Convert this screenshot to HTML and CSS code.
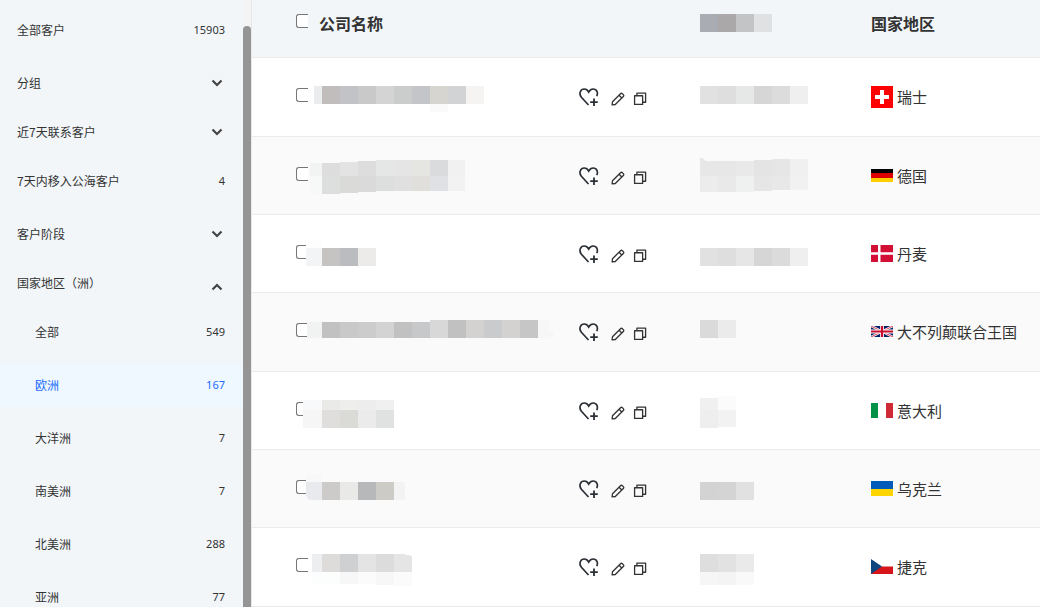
FILE: index.html
```html
<!DOCTYPE html>
<html lang="zh-CN">
<head>
  <meta charset="UTF-8">
  <meta name="viewport" content="width=device-width, initial-scale=1.0">
  <title>客户列表</title>
  <link rel="stylesheet" href="styles.css">
</head>

<body>
  <!-- shared icons -->
  <svg class="sprite" aria-hidden="true">
    <symbol id="arrow-down" viewBox="0 0 12 8">
      <path d="M1.5 1.5 L6 6 L10.5 1.5" fill="none" stroke="#444" stroke-width="2.2"/>
    </symbol>
    <symbol id="arrow-up" viewBox="0 0 12 8">
      <path d="M1.5 6.5 L6 2 L10.5 6.5" fill="none" stroke="#444" stroke-width="2.2"/>
    </symbol>
    <symbol id="heart" viewBox="0 0 20 18">
      <path d="M9.5 17 L2.4 9.3 C-0.6 5.5 1.6 1 5.2 1 C7.6 1 8.9 2.4 9.7 4 C10.6 2.4 12 1 14.2 1 C17.8 1 19.4 4.8 17.7 8.2" fill="none" stroke="#2b2f36" stroke-width="1.7"/>
      <path d="M15 10.5 V18 M11.2 14.2 H18.8" fill="none" stroke="#2b2f36" stroke-width="1.8"/>
    </symbol>
    <symbol id="pencil" viewBox="0 0 15 15">
      <path d="M1.2 13.8 L1.6 10.4 L10.2 1.8 Q11.2 0.8 12.2 1.8 L13.2 2.8 Q14.2 3.8 13.2 4.8 L4.6 13.4 Z M8.6 3.4 L11.6 6.4" fill="none" stroke="#333" stroke-width="1.4" stroke-linejoin="round"/>
    </symbol>
    <symbol id="copy" viewBox="0 0 15 15">
      <path d="M1.7 4 H10.3 V13.3 H1.7 Z M4.2 3.6 V1.2 H13.5 V11 H10.7" fill="none" stroke="#333" stroke-width="1.4" stroke-linejoin="round"/>
    </symbol>
  </svg>

  <div class="page">
    <nav class="sidebar">
      <a class="item" href="#"><span>全部客户</span><span class="count">15903</span></a>
      <button type="button" class="item group"><span>分组</span><svg class="arrow"><use href="#arrow-down"/></svg></button>
      <button type="button" class="item group"><span>近7天联系客户</span><svg class="arrow"><use href="#arrow-down"/></svg></button>
      <a class="item" href="#"><span>7天内移入公海客户</span><span class="count">4</span></a>
      <button type="button" class="item group"><span>客户阶段</span><svg class="arrow"><use href="#arrow-down"/></svg></button>
      <button type="button" class="item group open"><span>国家地区（洲）</span><svg class="arrow"><use href="#arrow-up"/></svg></button>
      <a class="item sub" href="#"><span>全部</span><span class="count">549</span></a>
      <a class="item sub active" href="#"><span>欧洲</span><span class="count">167</span></a>
      <a class="item sub" href="#"><span>大洋洲</span><span class="count">7</span></a>
      <a class="item sub" href="#"><span>南美洲</span><span class="count">7</span></a>
      <a class="item sub" href="#"><span>北美洲</span><span class="count">288</span></a>
      <a class="item sub" href="#"><span>亚洲</span><span class="count">77</span></a>
    </nav>
    <div class="scrollbar"><div class="thumb"></div></div>

    <main class="main">
      <table class="customers">
        <colgroup>
          <col class="col-name">
          <col class="col-hidden">
          <col>
        </colgroup>
        <thead>
          <tr>
            <th>
              <div class="head"><input type="checkbox" id="all"><label for="all">公司名称</label></div>
            </th>
            <th>
              <div class="head">
                <svg class="head-mosaic" viewBox="0 0 72 18" aria-hidden="true">
                  <rect width="18" height="18" fill="#a9acb2"/><rect x="18" width="18" height="18" fill="#aaa8a9"/><rect x="36" width="18" height="18" fill="#c3c4c6"/><rect x="54" width="18" height="18" fill="#e0e1e2"/>
                </svg>
              </div>
            </th>
            <th><div class="head">国家地区</div></th>
          </tr>
        </thead>
        <tbody>
          <tr>
            <td>
              <div class="company">
                <input type="checkbox" aria-label="选择">
                <svg class="mosaic" viewBox="0 0 252 77" aria-hidden="true">
                  <rect x="12" y="28" width="8" height="18" fill="#ebeced"/><rect x="20" y="28" width="18" height="18" fill="#c2bdbd"/><rect x="38" y="28" width="18" height="18" fill="#c1c3c6"/><rect x="56" y="28" width="18" height="18" fill="#c9c9ca"/><rect x="74" y="28" width="18" height="18" fill="#d4d4d4"/><rect x="92" y="28" width="18" height="18" fill="#cbcdcc"/><rect x="110" y="28" width="18" height="18" fill="#c3c5c8"/><rect x="128" y="28" width="18" height="18" fill="#d6d5d0"/><rect x="146" y="28" width="18" height="18" fill="#d1d3d5"/><rect x="164" y="28" width="18" height="18" fill="#f5f4f3"/>
                  <rect x="128" y="46" width="18" height="8" fill="#fafafa"/>
                </svg>
                <div class="actions">
                  <button type="button" aria-label="收藏"><svg class="heart"><use href="#heart"/></svg></button>
                  <button type="button" aria-label="编辑"><svg class="icon"><use href="#pencil"/></svg></button>
                  <button type="button" aria-label="复制"><svg class="icon"><use href="#copy"/></svg></button>
                </div>
              </div>
            </td>
            <td>
              <svg class="mosaic small" viewBox="0 0 108 77" aria-hidden="true">
                <rect y="28" width="18" height="18" fill="#e1e1e1"/><rect x="18" y="28" width="18" height="18" fill="#dedede"/><rect x="36" y="28" width="18" height="18" fill="#e5e8e7"/><rect x="54" y="28" width="18" height="18" fill="#d6d6d6"/><rect x="72" y="28" width="18" height="18" fill="#dcdcdc"/><rect x="90" y="28" width="18" height="18" fill="#efefef"/>
              </svg>
            </td>
            <td>
              <div class="country">
                <svg class="flag" viewBox="0 0 22 22"><rect width="22" height="22" fill="#f00"/><path d="M9 4 H13 V9 H18 V13 H13 V18 H9 V13 H4 V9 H9 Z" fill="#fff"/></svg>
                <span>瑞士</span>
              </div>
            </td>
          </tr>
          <tr>
            <td>
              <div class="company">
                <input type="checkbox" aria-label="选择">
                <svg class="mosaic" viewBox="0 0 252 77" aria-hidden="true">
                  <rect x="8" y="26" width="12" height="13" fill="#f2f4f4"/><rect x="20" y="26" width="18" height="13" fill="#dddddd"/><rect x="38" y="25" width="18" height="14" fill="#e3e3e3"/><rect x="56" y="24" width="18" height="15" fill="#dddddd"/><rect x="74" y="23" width="18" height="16" fill="#e4e7e6"/><rect x="92" y="23" width="18" height="16" fill="#e5e5e5"/><rect x="110" y="23" width="18" height="16" fill="#e5e5e2"/><rect x="128" y="23" width="18" height="16" fill="#dadbdd"/><rect x="146" y="23" width="17" height="16" fill="#f1f1f1"/>
                  <rect x="8" y="39" width="12" height="18" fill="#f6f9f8"/><rect x="20" y="39" width="18" height="18" fill="#dddede"/><rect x="38" y="39" width="18" height="17" fill="#dadad8"/><rect x="56" y="39" width="18" height="16" fill="#dadada"/><rect x="74" y="39" width="18" height="15" fill="#dddede"/><rect x="92" y="39" width="18" height="15" fill="#e0e0e0"/><rect x="110" y="39" width="18" height="15" fill="#e1dfdc"/><rect x="128" y="39" width="18" height="15" fill="#e0e1e4"/><rect x="146" y="39" width="17" height="15" fill="#f2f2f2"/>
                </svg>
                <div class="actions">
                  <button type="button" aria-label="收藏"><svg class="heart"><use href="#heart"/></svg></button>
                  <button type="button" aria-label="编辑"><svg class="icon"><use href="#pencil"/></svg></button>
                  <button type="button" aria-label="复制"><svg class="icon"><use href="#copy"/></svg></button>
                </div>
              </div>
            </td>
            <td>
              <svg class="mosaic small" viewBox="0 0 108 77" aria-hidden="true">
                <path d="M0 21 H3 L5 24 H18 V39 H0 Z" fill="#e7e7e7"/><rect x="18" y="24" width="18" height="15" fill="#e7e7e7"/><rect x="36" y="24" width="18" height="15" fill="#e9e9e9"/><rect x="54" y="23" width="18" height="16" fill="#e4e4e4"/><rect x="72" y="22" width="18" height="17" fill="#e6e6e6"/><rect x="90" y="22" width="18" height="17" fill="#f0f0f0"/>
                <rect y="39" width="18" height="16" fill="#ececec"/><rect x="18" y="39" width="18" height="16" fill="#e9e9e9"/><rect x="36" y="39" width="18" height="16" fill="#eef1f0"/><rect x="54" y="39" width="18" height="15" fill="#e6e6e6"/><rect x="72" y="39" width="18" height="14" fill="#e8e8e8"/><rect x="90" y="39" width="18" height="14" fill="#f1f1f1"/>
              </svg>
            </td>
            <td>
              <div class="country">
                <svg class="flag" viewBox="0 0 22 13"><rect width="22" height="13" fill="#ffce00"/><rect width="22" height="9" fill="#d00"/><rect width="22" height="4" fill="#000"/></svg>
                <span>德国</span>
              </div>
            </td>
          </tr>
          <tr>
            <td>
              <div class="company">
                <input type="checkbox" aria-label="选择">
                <svg class="mosaic" viewBox="0 0 252 77" aria-hidden="true">
                  <rect x="4" y="24" width="16" height="9" fill="#fdfdfd"/><rect x="4" y="33" width="16" height="18" fill="#f2f4f6"/><rect x="20" y="33" width="18" height="18" fill="#c6c4c2"/><rect x="38" y="33" width="18" height="18" fill="#babcbf"/><rect x="56" y="33" width="18" height="18" fill="#edebea"/>
                </svg>
                <div class="actions">
                  <button type="button" aria-label="收藏"><svg class="heart"><use href="#heart"/></svg></button>
                  <button type="button" aria-label="编辑"><svg class="icon"><use href="#pencil"/></svg></button>
                  <button type="button" aria-label="复制"><svg class="icon"><use href="#copy"/></svg></button>
                </div>
              </div>
            </td>
            <td>
              <svg class="mosaic small" viewBox="0 0 108 77" aria-hidden="true">
                <rect y="33" width="18" height="18" fill="#e1e1e1"/><rect x="18" y="33" width="18" height="18" fill="#dedede"/><rect x="36" y="33" width="18" height="18" fill="#e6e6e6"/><rect x="54" y="33" width="18" height="18" fill="#d6d6d6"/><rect x="72" y="33" width="18" height="18" fill="#dbdbdb"/><rect x="90" y="33" width="18" height="18" fill="#efefef"/>
              </svg>
            </td>
            <td>
              <div class="country">
                <svg class="flag" viewBox="0 0 22 17"><rect width="22" height="17" fill="#d20f34"/><path d="M7 0 H9.5 V7.3 H22 V9.7 H9.5 V17 H7 V9.7 H0 V7.3 H7 Z" fill="#fff"/></svg>
                <span>丹麦</span>
              </div>
            </td>
          </tr>
          <tr>
            <td>
              <div class="company">
                <input type="checkbox" aria-label="选择">
                <svg class="mosaic" viewBox="0 0 252 77" aria-hidden="true">
                  <rect x="5" y="29" width="15" height="16" fill="#f0f3f2"/><rect x="20" y="29" width="18" height="16" fill="#c1c1c1"/><rect x="38" y="29" width="18" height="16" fill="#c9c9ca"/><rect x="56" y="29" width="18" height="16" fill="#cccccd"/><rect x="74" y="29" width="18" height="16" fill="#d3d3d3"/><rect x="92" y="29" width="18" height="16" fill="#c1c1c1"/><rect x="110" y="29" width="18" height="16" fill="#c6c8ca"/><rect x="128" y="27" width="18" height="18" fill="#d8d8d8"/><rect x="146" y="27" width="18" height="18" fill="#c1c1c1"/><rect x="164" y="27" width="18" height="18" fill="#d4d2d0"/><rect x="182" y="27" width="18" height="18" fill="#c9cbcd"/><rect x="200" y="27" width="18" height="18" fill="#d4d2d0"/><rect x="218" y="27" width="18" height="18" fill="#c6c6c6"/>
                  <path d="M236 27 H247 V38 H252 V45 H236 Z" fill="#f7f7f7"/>
                </svg>
                <div class="actions">
                  <button type="button" aria-label="收藏"><svg class="heart"><use href="#heart"/></svg></button>
                  <button type="button" aria-label="编辑"><svg class="icon"><use href="#pencil"/></svg></button>
                  <button type="button" aria-label="复制"><svg class="icon"><use href="#copy"/></svg></button>
                </div>
              </div>
            </td>
            <td>
              <svg class="mosaic small" viewBox="0 0 108 77" aria-hidden="true">
                <rect y="27" width="18" height="18" fill="#dadada"/><rect x="18" y="27" width="18" height="18" fill="#ebebeb"/>
              </svg>
            </td>
            <td>
              <div class="country">
                <svg class="flag" viewBox="0 0 22 11">
                  <rect width="22" height="11" fill="#012169"/>
                  <path d="M0 0 L22 11 M22 0 L0 11" stroke="#fff" stroke-width="2.4"/>
                  <path d="M0 0 L22 11 M22 0 L0 11" stroke="#d8203c" stroke-width="0.9"/>
                  <path d="M11 0 V11 M0 5.5 H22" stroke="#fff" stroke-width="3.8"/>
                  <path d="M11 0 V11 M0 5.5 H22" stroke="#c8102e" stroke-width="2.2"/>
                </svg>
                <span>大不列颠联合王国</span>
              </div>
            </td>
          </tr>
          <tr>
            <td>
              <div class="company">
                <input type="checkbox" aria-label="选择">
                <svg class="mosaic" viewBox="0 0 252 77" aria-hidden="true">
                  <rect x="1" y="28" width="19" height="10" fill="#f8f9fb"/><rect x="20" y="28" width="18" height="10" fill="#eaeae8"/><rect x="38" y="28" width="18" height="10" fill="#eeeeec"/><rect x="56" y="28" width="18" height="10" fill="#ededed"/><rect x="74" y="28" width="18" height="10" fill="#f0f0f0"/>
                  <rect x="1" y="38" width="19" height="18" fill="#f6f6f6"/><rect x="20" y="38" width="18" height="18" fill="#e0dedc"/><rect x="38" y="38" width="18" height="18" fill="#dadad7"/><rect x="56" y="38" width="18" height="18" fill="#ebebeb"/><rect x="74" y="38" width="18" height="18" fill="#dfe2e1"/>
                </svg>
                <div class="actions">
                  <button type="button" aria-label="收藏"><svg class="heart"><use href="#heart"/></svg></button>
                  <button type="button" aria-label="编辑"><svg class="icon"><use href="#pencil"/></svg></button>
                  <button type="button" aria-label="复制"><svg class="icon"><use href="#copy"/></svg></button>
                </div>
              </div>
            </td>
            <td>
              <svg class="mosaic small" viewBox="0 0 108 77" aria-hidden="true">
                <rect y="26" width="18" height="12" fill="#f0f0f0"/><rect x="18" y="24" width="18" height="14" fill="#fbfbfb"/>
                <rect y="38" width="18" height="18" fill="#eeeeee"/><rect x="18" y="38" width="18" height="17" fill="#f2f2f2"/>
              </svg>
            </td>
            <td>
              <div class="country">
                <svg class="flag" viewBox="0 0 22 15"><rect width="22" height="15" fill="#fff"/><rect width="7" height="15" fill="#009246"/><rect x="15" width="7" height="15" fill="#ce2b37"/></svg>
                <span>意大利</span>
              </div>
            </td>
          </tr>
          <tr>
            <td>
              <div class="company">
                <input type="checkbox" aria-label="选择">
                <svg class="mosaic" viewBox="0 0 252 77" aria-hidden="true">
                  <rect x="4" y="24" width="16" height="8" fill="#f8f8f8"/><path d="M4 32 H20 V50 H7 L4 45 Z" fill="#e8eaed"/><rect x="20" y="32" width="18" height="18" fill="#cccbc9"/><rect x="38" y="32" width="18" height="18" fill="#e9eae8"/><rect x="56" y="32" width="18" height="18" fill="#b7b8ba"/><rect x="74" y="32" width="18" height="18" fill="#cccbc6"/><rect x="92" y="32" width="11" height="18" fill="#f3f3f3"/>
                </svg>
                <div class="actions">
                  <button type="button" aria-label="收藏"><svg class="heart"><use href="#heart"/></svg></button>
                  <button type="button" aria-label="编辑"><svg class="icon"><use href="#pencil"/></svg></button>
                  <button type="button" aria-label="复制"><svg class="icon"><use href="#copy"/></svg></button>
                </div>
              </div>
            </td>
            <td>
              <svg class="mosaic small" viewBox="0 0 108 77" aria-hidden="true">
                <rect y="32" width="18" height="18" fill="#d3d3d3"/><rect x="18" y="32" width="18" height="18" fill="#d4d4d4"/><rect x="36" y="32" width="18" height="18" fill="#e1e1e1"/>
              </svg>
            </td>
            <td>
              <div class="country">
                <svg class="flag" viewBox="0 0 22 15"><rect width="22" height="15" fill="#ffd500"/><rect width="22" height="8" fill="#005bbb"/></svg>
                <span>乌克兰</span>
              </div>
            </td>
          </tr>
          <tr>
            <td>
              <div class="company">
                <input type="checkbox" aria-label="选择">
                <svg class="mosaic" viewBox="0 0 252 77" aria-hidden="true">
                  <rect x="10" y="26" width="10" height="18" fill="#eceef0"/><rect x="20" y="26" width="18" height="18" fill="#dedcda"/><rect x="38" y="26" width="18" height="18" fill="#cfd0d2"/><rect x="56" y="26" width="18" height="18" fill="#e4e4e5"/><rect x="74" y="26" width="18" height="18" fill="#dcdcdd"/><path d="M92 26 H100 L110 28 V44 H92 Z" fill="#e5e5e5"/>
                  <rect x="10" y="44" width="28" height="12" fill="#fcfefe"/><rect x="38" y="44" width="18" height="12" fill="#f7f7f7"/><rect x="56" y="44" width="18" height="12" fill="#fbfbfb"/><rect x="74" y="44" width="18" height="13" fill="#f7f7f7"/><rect x="92" y="44" width="18" height="14" fill="#fbfbfb"/>
                </svg>
                <div class="actions">
                  <button type="button" aria-label="收藏"><svg class="heart"><use href="#heart"/></svg></button>
                  <button type="button" aria-label="编辑"><svg class="icon"><use href="#pencil"/></svg></button>
                  <button type="button" aria-label="复制"><svg class="icon"><use href="#copy"/></svg></button>
                </div>
              </div>
            </td>
            <td>
              <svg class="mosaic small" viewBox="0 0 108 77" aria-hidden="true">
                <rect y="26" width="18" height="18" fill="#dedede"/><rect x="18" y="26" width="18" height="18" fill="#e2e2e2"/><rect x="36" y="26" width="18" height="18" fill="#eaeaea"/>
                <rect y="44" width="18" height="13" fill="#f6f6f6"/><rect x="18" y="44" width="18" height="13" fill="#f4f4f4"/><rect x="36" y="44" width="18" height="13" fill="#f9f9f9"/>
              </svg>
            </td>
            <td>
              <div class="country">
                <svg class="flag" viewBox="0 0 22 15"><rect width="22" height="15" fill="#fff"/><rect y="7.5" width="22" height="7.5" fill="#d7141a"/><path d="M0 0 L11 7.5 L0 15 Z" fill="#11457e"/></svg>
                <span>捷克</span>
              </div>
            </td>
          </tr>
        </tbody>
      </table>
    </main>
  </div>
</body>
</html>
```
FILE: styles.css
```css
* {
  box-sizing: border-box;
}

body {
  margin: 0;
  font-family: "Noto Sans CJK SC", sans-serif;
  color: #333;
  background-color: #fff;
}

button {
  padding: 0;
  border: none;
  background: none;
  font-family: inherit;
  color: inherit;
  cursor: pointer;
}

.sprite {
  display: none;
}

.page {
  display: flex;
  height: 100vh;
  overflow: hidden;
}

/* sidebar */
.sidebar {
  width: 243px;
  flex-shrink: 0;
  padding-top: 8px;
  overflow: hidden;
  background-color: #f2f6f9;
}

.item {
  display: flex;
  align-items: center;
  justify-content: space-between;
  width: 100%;
  height: 44px;
  margin-bottom: 9px;
  padding: 0 18px 0 17px;
  font-size: 12px;
  line-height: 18px;
  color: #333;
  text-decoration: none;
}

.group {
  margin-bottom: 5px;
  padding-right: 20px;
}

.sub {
  padding-left: 35px;
}

.active {
  background-color: #eff7ff;
  color: #1a6dff;
}

.count {
  font-family: "Noto Sans", sans-serif;
  font-size: 11px;
}

.arrow {
  width: 12px;
  height: 8px;
}

.open .arrow {
  margin-top: 8px;
}

.scrollbar {
  width: 9px;
  flex-shrink: 0;
  padding-top: 26px;
  border-right: 1px solid #e6e8ea;
  background-color: #f4f4f4;
}

.thumb {
  height: 100%;
  border-radius: 4px 4px 0 0;
  background-color: #959595;
}

/* table */
.main {
  flex: 1;
  min-width: 0;
  overflow: hidden;
}

.customers {
  width: 100%;
  table-layout: fixed;
  border-collapse: separate;
  border-spacing: 0;
}

.col-name {
  width: 448px;
}

.col-hidden {
  width: 171px;
}

.customers th,
.customers td {
  padding: 0;
  border-bottom: 1px solid #ebebeb;
  text-align: left;
  vertical-align: top;
}

.customers th {
  background-color: #f2f6f9;
  font-size: 16px;
  line-height: 24px;
}

.customers th:first-child,
.customers td:first-child {
  padding-left: 44px;
}

.customers tbody tr {
  height: 78px;
}

.customers tbody tr:nth-child(3n+1) {
  height: 79px;
}

.customers tbody tr:nth-child(even) {
  background-color: #fafafa;
}

.head {
  display: flex;
  align-items: center;
  height: 57px;
  padding-bottom: 11px;
}

.head label {
  margin-left: 11px;
}

.head-mosaic {
  width: 72px;
  height: 18px;
}

input[type="checkbox"] {
  appearance: none;
  flex-shrink: 0;
  width: 12px;
  height: 14px;
  margin: 0 0 4px;
  border: 1px solid #767676;
  border-right: none;
  border-radius: 3px 0 0 3px;
  background-color: #fff;
}

input[type="checkbox"]:checked {
  background-color: #1a6dff;
}

.company,
.country {
  display: flex;
  align-items: center;
  height: 77px;
}

.mosaic {
  display: block;
  flex-shrink: 0;
  width: 252px;
  height: 77px;
  margin-left: -6px;
  pointer-events: none;
  shape-rendering: crispEdges;
}

.mosaic.small {
  width: 108px;
  margin-left: 0;
}

.actions {
  display: flex;
  align-items: flex-end;
  gap: 8px;
  margin-left: 25px;
}

.actions button,
.actions svg {
  display: block;
}

.heart {
  width: 20px;
  height: 18px;
  margin-right: 4px;
}

.icon {
  width: 14px;
  height: 14px;
}

.country {
  gap: 4px;
  font-size: 15px;
  line-height: 22px;
}

.flag {
  width: 22px;
  flex-shrink: 0;
}
```
